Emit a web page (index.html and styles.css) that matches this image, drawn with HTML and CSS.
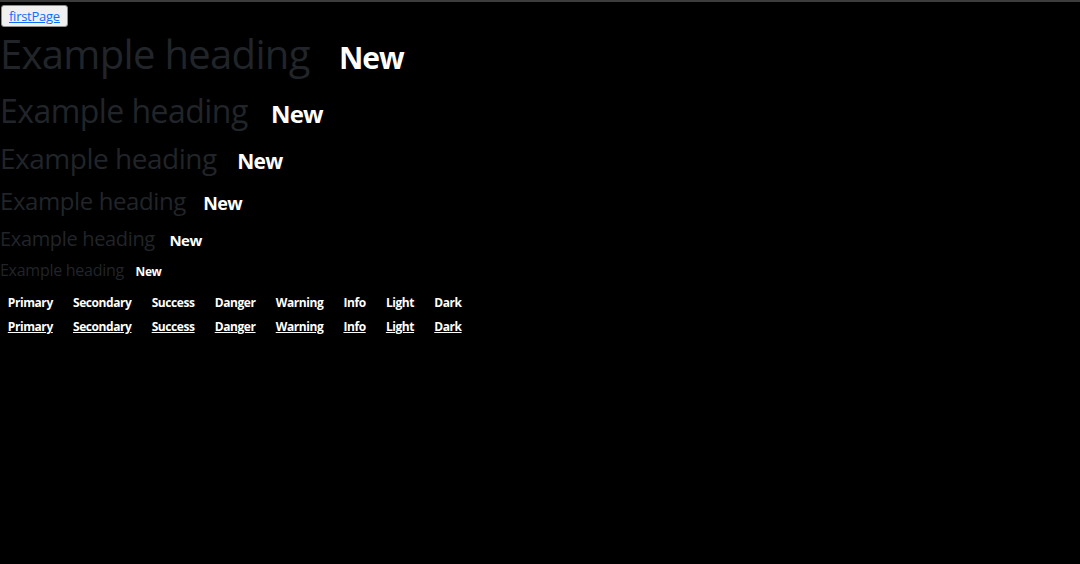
FILE: index.html
```html
<!DOCTYPE html>
<html>
<head>
<meta charset="utf-8">
<link rel="stylesheet" href="styles.css">
</head>
<body>
<div class="toolbar"><button class="nav-btn"><a href="#">firstPage</a></button></div>
<main class="content">
  <h1 class="h h1">Example heading <span class="badge">New</span></h1>
  <h2 class="h h2">Example heading <span class="badge">New</span></h2>
  <h3 class="h h3">Example heading <span class="badge">New</span></h3>
  <h4 class="h h4">Example heading <span class="badge">New</span></h4>
  <h5 class="h h5">Example heading <span class="badge">New</span></h5>
  <h6 class="h h6">Example heading <span class="badge">New</span></h6>
  <div class="badge-row">
    <span class="badge">Primary</span>
    <span class="badge">Secondary</span>
    <span class="badge">Success</span>
    <span class="badge">Danger</span>
    <span class="badge">Warning</span>
    <span class="badge">Info</span>
    <span class="badge">Light</span>
    <span class="badge">Dark</span>
  </div>
  <div class="badge-row">
    <a href="#" class="badge link">Primary</a>
    <a href="#" class="badge link">Secondary</a>
    <a href="#" class="badge link">Success</a>
    <a href="#" class="badge link">Danger</a>
    <a href="#" class="badge link">Warning</a>
    <a href="#" class="badge link">Info</a>
    <a href="#" class="badge link">Light</a>
    <a href="#" class="badge link">Dark</a>
  </div>
</main>
</body>
</html>
```
FILE: styles.css
```css
html, body {
  margin: 0;
  padding: 0;
  background: #000;
}
body {
  border-top: 2px solid #3c3c3c;
  font-family: "Open Sans", "Noto Sans", sans-serif;
  font-size: 16px;
  line-height: 1.5;
  color: #fff;
  min-height: 562px;
}
.toolbar {
  height: 28px;
  padding: 1px 0 0 1px;
  box-sizing: border-box;
}
.nav-btn {
  height: 22px;
  padding: 0 7px;
  background: #f0f0f0;
  border: 1px solid #8f8f8f;
  border-radius: 3px;
  font-family: "Open Sans", sans-serif;
  font-size: 13px;
  line-height: 20px;
  letter-spacing: -0.02em;
}
.nav-btn a {
  color: #0d6efd;
}
.content {
  padding: 0;
}
.h {
  margin: 0 0 8px 0;
  font-weight: 400;
  line-height: 1.2;
  color: #212529;
  letter-spacing: -0.017em;
}
.h1 { font-size: 40px; }
.h2 { font-size: 32px; }
.h3 { font-size: 28px; }
.h4 { font-size: 24px; }
.h5 { font-size: 20px; }
.h6 { font-size: 16px; }
.badge {
  display: inline-block;
  padding: 0.35em 0.65em;
  font-size: 0.75em;
  font-weight: 700;
  line-height: 1;
  color: #fff;
  white-space: nowrap;
  vertical-align: baseline;
  border-radius: 0.375rem;
  letter-spacing: -0.035em;
}
.badge-row {
  line-height: 24px;
  height: 24.5px;
  letter-spacing: 0.4px;
}
.badge-row:first-of-type {
  margin-top: -1px;
}
.link {
  color: #fff;
  text-decoration: underline;
}
```
